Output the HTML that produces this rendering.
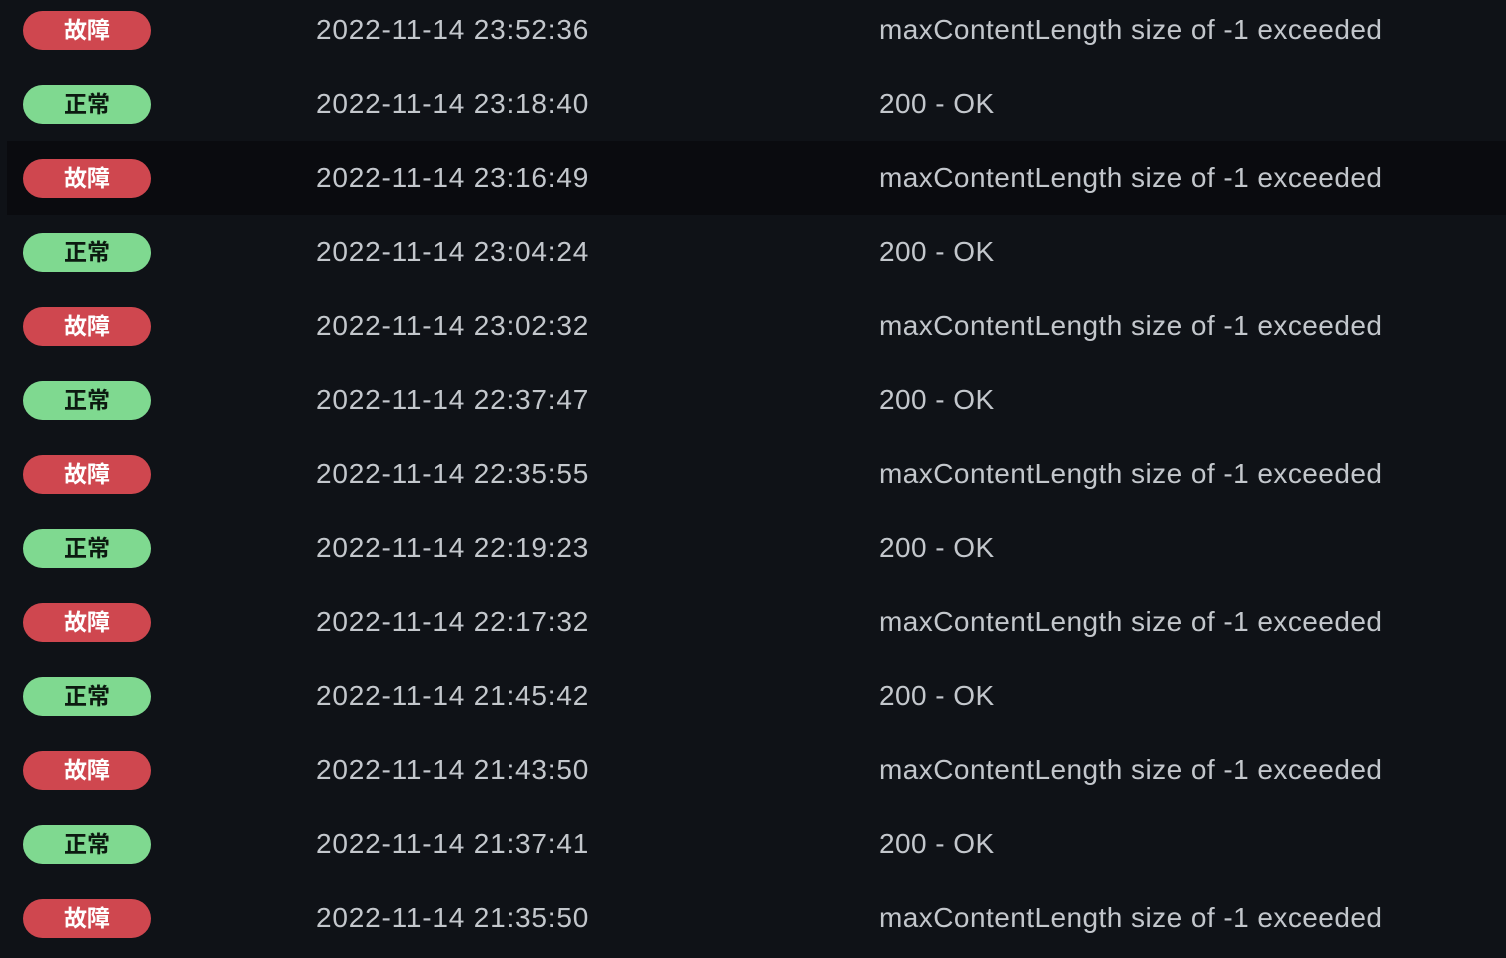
<!DOCTYPE html>
<html><head><meta charset="utf-8"><style>
body{margin:0;width:1506px;height:958px;background:#0f1217;overflow:hidden;font-family:"Liberation Sans","Noto Sans CJK SC",sans-serif;}
.row{position:absolute;left:7px;width:1499px;height:74px;}
.row.hl{background:#0a0b0f;}
.b{position:absolute;left:16px;top:18px;width:128px;height:39px;border-radius:20px;font-weight:bold;font-size:23px;line-height:39px;text-align:center;}
.r{background:#cf474f;color:#fff;}
.g{background:#7fd990;color:#0c1a10;}
.d{position:absolute;left:309px;top:0;line-height:74px;font-size:28px;letter-spacing:0.8px;color:#c3c7cc;}
.m{position:absolute;left:872px;top:0;line-height:74px;font-size:28px;letter-spacing:0.45px;color:#c3c7cc;}
</style></head><body>
<div class="row" style="top:-7px"><div class="b r">故障</div><div class="d">2022-11-14 23:52:36</div><div class="m">maxContentLength size of -1 exceeded</div></div>
<div class="row" style="top:67px"><div class="b g">正常</div><div class="d">2022-11-14 23:18:40</div><div class="m">200 - OK</div></div>
<div class="row hl" style="top:141px"><div class="b r">故障</div><div class="d">2022-11-14 23:16:49</div><div class="m">maxContentLength size of -1 exceeded</div></div>
<div class="row" style="top:215px"><div class="b g">正常</div><div class="d">2022-11-14 23:04:24</div><div class="m">200 - OK</div></div>
<div class="row" style="top:289px"><div class="b r">故障</div><div class="d">2022-11-14 23:02:32</div><div class="m">maxContentLength size of -1 exceeded</div></div>
<div class="row" style="top:363px"><div class="b g">正常</div><div class="d">2022-11-14 22:37:47</div><div class="m">200 - OK</div></div>
<div class="row" style="top:437px"><div class="b r">故障</div><div class="d">2022-11-14 22:35:55</div><div class="m">maxContentLength size of -1 exceeded</div></div>
<div class="row" style="top:511px"><div class="b g">正常</div><div class="d">2022-11-14 22:19:23</div><div class="m">200 - OK</div></div>
<div class="row" style="top:585px"><div class="b r">故障</div><div class="d">2022-11-14 22:17:32</div><div class="m">maxContentLength size of -1 exceeded</div></div>
<div class="row" style="top:659px"><div class="b g">正常</div><div class="d">2022-11-14 21:45:42</div><div class="m">200 - OK</div></div>
<div class="row" style="top:733px"><div class="b r">故障</div><div class="d">2022-11-14 21:43:50</div><div class="m">maxContentLength size of -1 exceeded</div></div>
<div class="row" style="top:807px"><div class="b g">正常</div><div class="d">2022-11-14 21:37:41</div><div class="m">200 - OK</div></div>
<div class="row" style="top:881px"><div class="b r">故障</div><div class="d">2022-11-14 21:35:50</div><div class="m">maxContentLength size of -1 exceeded</div></div>
</body></html>
